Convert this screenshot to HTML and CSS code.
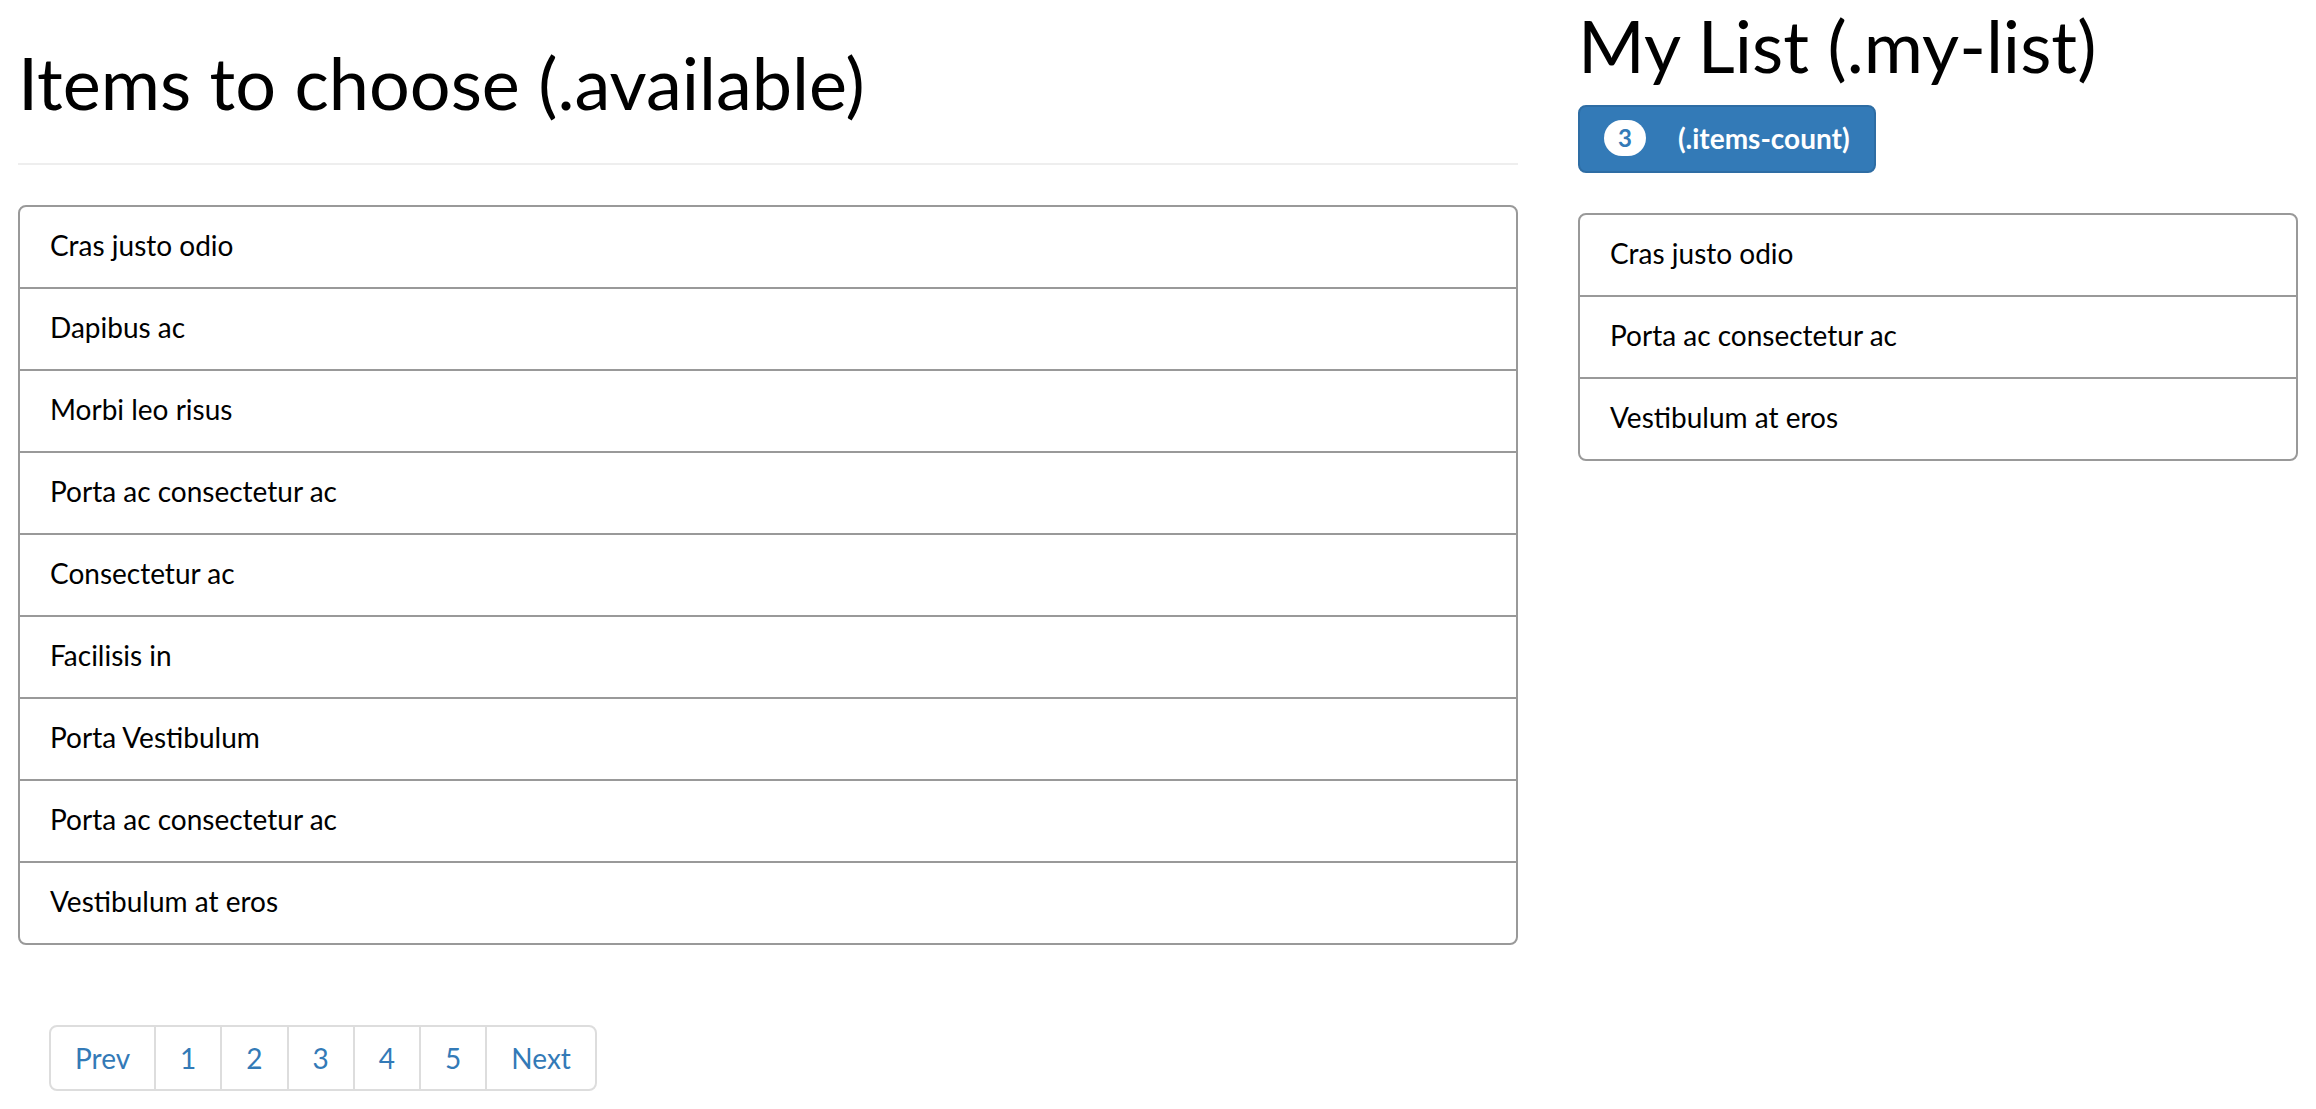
FILE: index.html
```html
<!DOCTYPE html>
<html lang="en">
<head>
<meta charset="utf-8">
<title>Items to choose</title>
<link rel="stylesheet" href="styles.css">
</head>
<body>
<div class="page">
  <div class="col-main">
    <div class="page-header">
      <h1>Items to choose (.available)</h1>
    </div>
    <ul class="list-group">
      <li class="list-group-item">Cras justo odio</li>
      <li class="list-group-item">Dapibus ac</li>
      <li class="list-group-item">Morbi leo risus</li>
      <li class="list-group-item">Porta ac consectetur ac</li>
      <li class="list-group-item">Consectetur ac</li>
      <li class="list-group-item">Facilisis in</li>
      <li class="list-group-item">Porta Vestibulum</li>
      <li class="list-group-item">Porta ac consectetur ac</li>
      <li class="list-group-item">Vestibulum at eros</li>
    </ul>
    <ul class="pagination">
      <li><a href="#">Prev</a></li>
      <li><a href="#">1</a></li>
      <li><a href="#">2</a></li>
      <li><a href="#">3</a></li>
      <li><a href="#">4</a></li>
      <li><a href="#">5</a></li>
      <li><a href="#">Next</a></li>
    </ul>
  </div>
  <div class="col-side">
    <h1 class="side-title">My List (.my-list)</h1>
    <button class="btn-primary" type="button"><span class="badge">3</span><span class="btn-label">(.items-count)</span></button>
    <ul class="list-group list-mine">
      <li class="list-group-item">Cras justo odio</li>
      <li class="list-group-item">Porta ac consectetur ac</li>
      <li class="list-group-item">Vestibulum at eros</li>
    </ul>
  </div>
</div>
</body>
</html>
```

FILE: styles.css
```css
* { box-sizing: border-box; }

html, body {
  margin: 0;
  padding: 0;
  background: #fff;
}

body {
  font-family: Lato, "Helvetica Neue", Helvetica, Arial, sans-serif;
  font-size: 28px;
  line-height: 40px;
  color: #000;
}

.page {
  display: flex;
  align-items: flex-start;
  gap: 60px;
  padding: 0 18px;
}

.col-main {
  width: 1500px;
  flex: none;
}

.col-side {
  width: 720px;
  flex: none;
}

h1 {
  font-size: 72px;
  font-weight: 400;
  line-height: 79px;
  margin: 0 0 20px 0;
}

.page-header {
  margin-top: 43px;
  padding-bottom: 21px;
  border-bottom: 2px solid #eee;
  margin-bottom: 40px;
}

.side-title {
  margin-top: 6px;
}

.list-group {
  list-style: none;
  margin: 0;
  padding: 0;
  border: 2px solid #999;
  border-radius: 8px;
}

.list-group-item {
  padding: 18px 30px 22px 30px;
  line-height: 40px;
}

.list-group-item + .list-group-item {
  border-top: 2px solid #999;
}

.btn-primary {
  display: inline-flex;
  align-items: center;
  height: 68px;
  padding: 0 24px 3px 24px;
  margin: 0 0 40px 0;
  font-family: inherit;
  font-size: 28px;
  line-height: 40px;
  font-weight: 700;
  color: #fff;
  background: #337ab7;
  border: 2px solid #2e6da4;
  border-radius: 8px;
  cursor: pointer;
}

.badge {
  display: inline-block;
  min-width: 20px;
  padding: 6px 14px;
  font-size: 24px;
  font-weight: 700;
  line-height: 24px;
  color: #337ab7;
  background: #fff;
  border-radius: 20px;
  text-align: center;
}

.btn-label {
  margin-left: 32px;
}

.pagination {
  display: flex;
  list-style: none;
  margin: 80px 0 0 31px;
  padding: 0;
}

.pagination li + li {
  margin-left: -2px;
}

.pagination a {
  display: block;
  padding: 11px 24px;
  line-height: 40px;
  font-size: 28px;
  color: #337ab7;
  text-decoration: none;
  border: 2px solid #ddd;
  background: #fff;
}

.pagination li:first-child a {
  border-radius: 8px 0 0 8px;
}

.pagination li:last-child a {
  border-radius: 0 8px 8px 0;
}
```
